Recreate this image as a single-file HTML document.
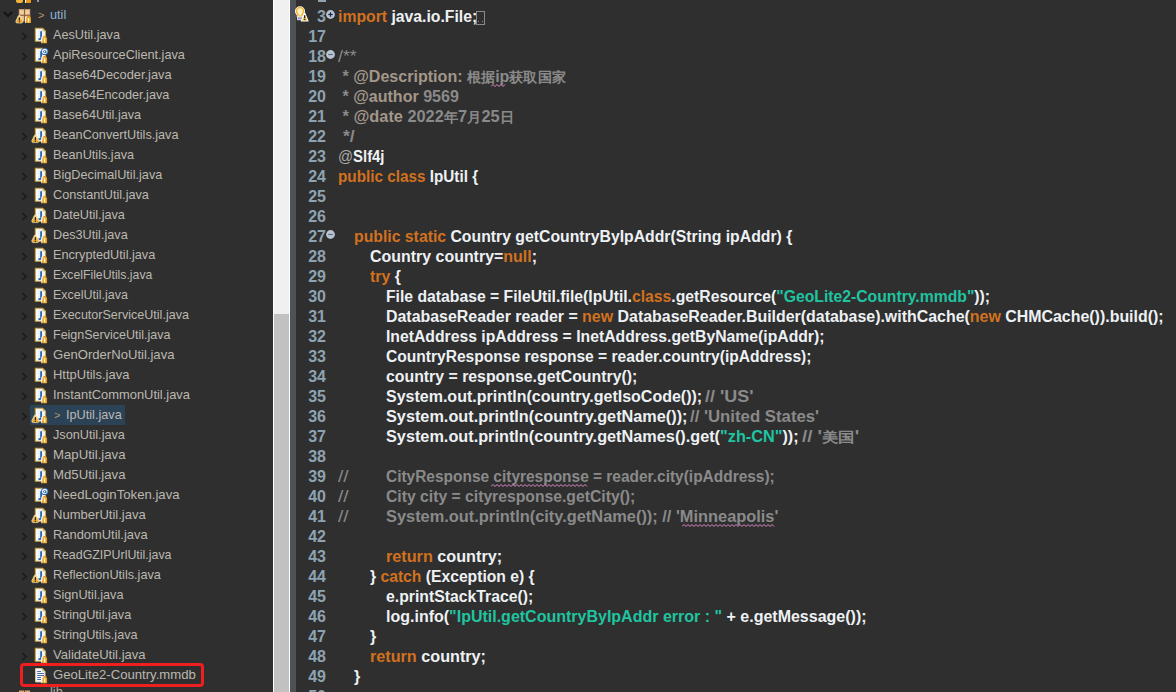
<!DOCTYPE html>
<html><head><meta charset="utf-8"><style>
html,body{margin:0;padding:0;}
body{width:1176px;height:692px;overflow:hidden;position:relative;background:#2f2f2f;font-family:"Liberation Sans",sans-serif;}
#left{position:absolute;left:0;top:0;width:273px;height:692px;background:#2f2f2f;overflow:hidden;}
#sb{position:absolute;left:273px;top:0;width:17px;height:692px;background:#f0f0f0;box-sizing:border-box;border-left:1px solid #fff;border-right:1px solid #fff;}
#thumb{position:absolute;left:274px;top:314px;width:15px;height:378px;background:#c1c1c1;}
#ruler{position:absolute;left:290px;top:0;width:6px;height:692px;background:#4e5256;}
.tl{position:absolute;white-space:pre;transform-origin:0 0;font-size:12.7px;line-height:20px;color:#bcb8b0;}
.dirty{color:#b8956a;}
.ico{position:absolute;line-height:0;}
.sel{position:absolute;left:30px;width:95px;height:20px;background:#2b4257;}
.redbox{position:absolute;left:20px;top:663px;width:184px;height:24px;box-sizing:border-box;border:3px solid #f01e1e;border-radius:4px;}
.ln{position:absolute;left:0;width:326px;text-align:right;font-size:16px;line-height:20px;font-weight:bold;color:#8ea3b1;}
.cl{position:absolute;white-space:pre;font-size:16px;line-height:20px;font-weight:bold;transform-origin:0 0;}
.k{color:#d2711e;} .p{color:#eef1f4;} .s{color:#1fc4a0;} .c{color:#8a8a8a;} .ct{color:#8a8a8a;font-weight:normal;} .jt{color:#a3978a;} .an{color:#a8a8a8;font-weight:normal;}
.cj{font-size:14px;}
.box{position:absolute;left:476px;top:11px;width:9px;height:14px;box-sizing:border-box;border:1px solid #8a8a8a;}
</style></head><body>
<svg width="0" height="0" style="position:absolute"><defs><linearGradient id="lg" x1="0" y1="0" x2="1" y2="0"><stop offset="0" stop-color="#e08a10"/><stop offset="0.5" stop-color="#f8c040"/><stop offset="1" stop-color="#e08a10"/></linearGradient><linearGradient id="wg2" x1="0" y1="0" x2="0" y2="1"><stop offset="0" stop-color="#f9dc84"/><stop offset="1" stop-color="#e69a1c"/></linearGradient></defs></svg>
<div id="left">
<div style="position:absolute;left:16px;top:0;width:7px;height:3px;background:#efb43a;border-radius:0 0 2px 2px"></div>
<div style="position:absolute;left:25px;top:0;width:1px;height:3px;background:#fff"></div>
<div style="position:absolute;left:26px;top:0;width:5px;height:3px;background:#ee9a14;border-radius:0 0 1px 1px"></div>
<div style="position:absolute;left:37px;top:0;width:2px;height:2px;background:#8a9ab0"></div>
<div class="ico" style="top:11px;left:3px"><svg width="10" height="7" viewBox="0 0 10 7"><path d="M1 1l4 4 4-4" fill="none" stroke="#121212" stroke-width="1.8"/></svg></div>
<div class="ico" style="top:8px;left:15px"><svg width="17" height="17" viewBox="0 0 17 17" overflow="visible"><rect x="3.8" y="1.1" width="11.4" height="12.4" fill="#d9aa7c"/><rect x="5" y="2.3" width="3.8" height="4" fill="#ecd3a0"/><rect x="10.4" y="2.3" width="3.8" height="4" fill="#ecd3a0"/><rect x="5" y="8" width="3.8" height="4" fill="#e4c494"/><rect x="10.4" y="8" width="3.8" height="4" fill="#e4c494"/><path d="M9.5 0.5v13.5M3.8 7.3h11.8" stroke="#8a5634" stroke-width="0.9"/><g transform="translate(2,-0.6)"><path d="M2.35 7.9 Q3.1 7.9 3.6 8.9 L5.8 13.6 Q6.3 15.6 4.6 15.6 H0.1 Q-1.6 15.6 -1.1 13.6 L1.1 8.9 Q1.6 7.9 2.35 7.9 Z" fill="url(#wg2)" stroke="#fbf0d0" stroke-width="0.6"/><path d="M2.35 10.2v3" stroke="#1e1200" stroke-width="1.1"/><rect x="1.8" y="13.9" width="1.1" height="1" fill="#1e1200"/></g><g transform="translate(1.9,-1.1)"><rect x="8.3" y="9.8" width="1.3" height="6.4" fill="#fff"/><rect x="9.5" y="10.4" width="4.6" height="5.8" rx="0.5" fill="url(#lg)"/><rect x="10.2" y="9" width="3.2" height="1.6" rx="0.4" fill="#e89a18"/><rect x="10.9" y="11.4" width="1.3" height="3.8" fill="#fff2b8"/></g></svg></div>
<div class="tl" style="top:5px;left:38px"><span class="dirty" style="font-size:11px">&gt;</span></div><div class="tl" style="top:5px;left:50px;color:#8cb2d6">util</div>
<div class="ico" style="top:32px;left:21px"><svg width="7" height="9" viewBox="0 0 7 9"><path d="M1.2 1l4 3.5-4 3.5" fill="none" stroke="#1a1a1a" stroke-width="1.5"/></svg></div>
<div class="ico" style="top:27px;left:33px"><svg width="16" height="18" viewBox="0 0 16 18" overflow="visible"><path d="M2.3 1.3h7.3l2.9 2.9v10.1h-10.2z" fill="#eef3fb" stroke="#c8a040" stroke-width="1.1"/><path d="M9.6 1.3v2.9h2.9z" fill="#d6b868"/><path d="M3.3 2.3h1.2v11h-1.2z" fill="#fff"/><path d="M8.1 4.2v6.3c0 1.3-1 1.8-2.6 1.5" fill="none" stroke="#2866a8" stroke-width="1.8"/><rect x="8.3" y="9.8" width="1.3" height="6.4" fill="#fff"/><rect x="9.5" y="10.4" width="4.6" height="5.8" rx="0.5" fill="url(#lg)"/><rect x="10.2" y="9" width="3.2" height="1.6" rx="0.4" fill="#e89a18"/><rect x="10.9" y="11.4" width="1.3" height="3.8" fill="#fff2b8"/></svg></div>
<div class="tl" style="top:25px;left:53px">AesUtil.java</div>
<div class="ico" style="top:52px;left:21px"><svg width="7" height="9" viewBox="0 0 7 9"><path d="M1.2 1l4 3.5-4 3.5" fill="none" stroke="#1a1a1a" stroke-width="1.5"/></svg></div>
<div class="ico" style="top:47px;left:33px"><svg width="16" height="18" viewBox="0 0 16 18" overflow="visible"><path d="M2.3 1.3h7.3l2.9 2.9v10.1h-10.2z" fill="#eef3fb" stroke="#c8a040" stroke-width="1.1"/><path d="M9.6 1.3v2.9h2.9z" fill="#d6b868"/><path d="M3.3 2.3h1.2v11h-1.2z" fill="#fff"/><path d="M8.1 4.2v6.3c0 1.3-1 1.8-2.6 1.5" fill="none" stroke="#2866a8" stroke-width="1.8"/><circle cx="11.7" cy="4.4" r="3.6" fill="#2a64a8"/><circle cx="11.7" cy="4.4" r="2.7" fill="#fff"/><circle cx="11.7" cy="4.6" r="1.2" fill="none" stroke="#2a64a8" stroke-width="1"/><path d="M12.9 4v1.6c0 .6.6.8 1 .3" fill="none" stroke="#2a64a8" stroke-width="0.9"/><rect x="8.3" y="9.8" width="1.3" height="6.4" fill="#fff"/><rect x="9.5" y="10.4" width="4.6" height="5.8" rx="0.5" fill="url(#lg)"/><rect x="10.2" y="9" width="3.2" height="1.6" rx="0.4" fill="#e89a18"/><rect x="10.9" y="11.4" width="1.3" height="3.8" fill="#fff2b8"/></svg></div>
<div class="tl" style="top:45px;left:53px">ApiResourceClient.java</div>
<div class="ico" style="top:72px;left:21px"><svg width="7" height="9" viewBox="0 0 7 9"><path d="M1.2 1l4 3.5-4 3.5" fill="none" stroke="#1a1a1a" stroke-width="1.5"/></svg></div>
<div class="ico" style="top:67px;left:33px"><svg width="16" height="18" viewBox="0 0 16 18" overflow="visible"><path d="M2.3 1.3h7.3l2.9 2.9v10.1h-10.2z" fill="#eef3fb" stroke="#c8a040" stroke-width="1.1"/><path d="M9.6 1.3v2.9h2.9z" fill="#d6b868"/><path d="M3.3 2.3h1.2v11h-1.2z" fill="#fff"/><path d="M8.1 4.2v6.3c0 1.3-1 1.8-2.6 1.5" fill="none" stroke="#2866a8" stroke-width="1.8"/><rect x="8.3" y="9.8" width="1.3" height="6.4" fill="#fff"/><rect x="9.5" y="10.4" width="4.6" height="5.8" rx="0.5" fill="url(#lg)"/><rect x="10.2" y="9" width="3.2" height="1.6" rx="0.4" fill="#e89a18"/><rect x="10.9" y="11.4" width="1.3" height="3.8" fill="#fff2b8"/></svg></div>
<div class="tl" style="top:65px;left:53px;transform:scaleX(1.0138)">Base64Decoder.java</div>
<div class="ico" style="top:92px;left:21px"><svg width="7" height="9" viewBox="0 0 7 9"><path d="M1.2 1l4 3.5-4 3.5" fill="none" stroke="#1a1a1a" stroke-width="1.5"/></svg></div>
<div class="ico" style="top:87px;left:33px"><svg width="16" height="18" viewBox="0 0 16 18" overflow="visible"><path d="M2.3 1.3h7.3l2.9 2.9v10.1h-10.2z" fill="#eef3fb" stroke="#c8a040" stroke-width="1.1"/><path d="M9.6 1.3v2.9h2.9z" fill="#d6b868"/><path d="M3.3 2.3h1.2v11h-1.2z" fill="#fff"/><path d="M8.1 4.2v6.3c0 1.3-1 1.8-2.6 1.5" fill="none" stroke="#2866a8" stroke-width="1.8"/><rect x="8.3" y="9.8" width="1.3" height="6.4" fill="#fff"/><rect x="9.5" y="10.4" width="4.6" height="5.8" rx="0.5" fill="url(#lg)"/><rect x="10.2" y="9" width="3.2" height="1.6" rx="0.4" fill="#e89a18"/><rect x="10.9" y="11.4" width="1.3" height="3.8" fill="#fff2b8"/></svg></div>
<div class="tl" style="top:85px;left:53px">Base64Encoder.java</div>
<div class="ico" style="top:112px;left:21px"><svg width="7" height="9" viewBox="0 0 7 9"><path d="M1.2 1l4 3.5-4 3.5" fill="none" stroke="#1a1a1a" stroke-width="1.5"/></svg></div>
<div class="ico" style="top:107px;left:33px"><svg width="16" height="18" viewBox="0 0 16 18" overflow="visible"><path d="M2.3 1.3h7.3l2.9 2.9v10.1h-10.2z" fill="#eef3fb" stroke="#c8a040" stroke-width="1.1"/><path d="M9.6 1.3v2.9h2.9z" fill="#d6b868"/><path d="M3.3 2.3h1.2v11h-1.2z" fill="#fff"/><path d="M8.1 4.2v6.3c0 1.3-1 1.8-2.6 1.5" fill="none" stroke="#2866a8" stroke-width="1.8"/><rect x="8.3" y="9.8" width="1.3" height="6.4" fill="#fff"/><rect x="9.5" y="10.4" width="4.6" height="5.8" rx="0.5" fill="url(#lg)"/><rect x="10.2" y="9" width="3.2" height="1.6" rx="0.4" fill="#e89a18"/><rect x="10.9" y="11.4" width="1.3" height="3.8" fill="#fff2b8"/></svg></div>
<div class="tl" style="top:105px;left:53px">Base64Util.java</div>
<div class="ico" style="top:132px;left:21px"><svg width="7" height="9" viewBox="0 0 7 9"><path d="M1.2 1l4 3.5-4 3.5" fill="none" stroke="#1a1a1a" stroke-width="1.5"/></svg></div>
<div class="ico" style="top:127px;left:33px"><svg width="16" height="18" viewBox="0 0 16 18" overflow="visible"><path d="M2.3 1.3h7.3l2.9 2.9v10.1h-10.2z" fill="#eef3fb" stroke="#c8a040" stroke-width="1.1"/><path d="M9.6 1.3v2.9h2.9z" fill="#d6b868"/><path d="M3.3 2.3h1.2v11h-1.2z" fill="#fff"/><path d="M8.1 4.2v6.3c0 1.3-1 1.8-2.6 1.5" fill="none" stroke="#2866a8" stroke-width="1.8"/><rect x="8.3" y="9.8" width="1.3" height="6.4" fill="#fff"/><rect x="9.5" y="10.4" width="4.6" height="5.8" rx="0.5" fill="url(#lg)"/><rect x="10.2" y="9" width="3.2" height="1.6" rx="0.4" fill="#e89a18"/><rect x="10.9" y="11.4" width="1.3" height="3.8" fill="#fff2b8"/><path d="M2.35 7.9 Q3.1 7.9 3.6 8.9 L5.8 13.6 Q6.3 15.6 4.6 15.6 H0.1 Q-1.6 15.6 -1.1 13.6 L1.1 8.9 Q1.6 7.9 2.35 7.9 Z" fill="url(#wg2)" stroke="#fbf0d0" stroke-width="0.6"/><path d="M2.35 10.2v3" stroke="#1e1200" stroke-width="1.1"/><rect x="1.8" y="13.9" width="1.1" height="1" fill="#1e1200"/></svg></div>
<div class="tl" style="top:125px;left:53px">BeanConvertUtils.java</div>
<div class="ico" style="top:152px;left:21px"><svg width="7" height="9" viewBox="0 0 7 9"><path d="M1.2 1l4 3.5-4 3.5" fill="none" stroke="#1a1a1a" stroke-width="1.5"/></svg></div>
<div class="ico" style="top:147px;left:33px"><svg width="16" height="18" viewBox="0 0 16 18" overflow="visible"><path d="M2.3 1.3h7.3l2.9 2.9v10.1h-10.2z" fill="#eef3fb" stroke="#c8a040" stroke-width="1.1"/><path d="M9.6 1.3v2.9h2.9z" fill="#d6b868"/><path d="M3.3 2.3h1.2v11h-1.2z" fill="#fff"/><path d="M8.1 4.2v6.3c0 1.3-1 1.8-2.6 1.5" fill="none" stroke="#2866a8" stroke-width="1.8"/><rect x="8.3" y="9.8" width="1.3" height="6.4" fill="#fff"/><rect x="9.5" y="10.4" width="4.6" height="5.8" rx="0.5" fill="url(#lg)"/><rect x="10.2" y="9" width="3.2" height="1.6" rx="0.4" fill="#e89a18"/><rect x="10.9" y="11.4" width="1.3" height="3.8" fill="#fff2b8"/></svg></div>
<div class="tl" style="top:145px;left:53px">BeanUtils.java</div>
<div class="ico" style="top:172px;left:21px"><svg width="7" height="9" viewBox="0 0 7 9"><path d="M1.2 1l4 3.5-4 3.5" fill="none" stroke="#1a1a1a" stroke-width="1.5"/></svg></div>
<div class="ico" style="top:167px;left:33px"><svg width="16" height="18" viewBox="0 0 16 18" overflow="visible"><path d="M2.3 1.3h7.3l2.9 2.9v10.1h-10.2z" fill="#eef3fb" stroke="#c8a040" stroke-width="1.1"/><path d="M9.6 1.3v2.9h2.9z" fill="#d6b868"/><path d="M3.3 2.3h1.2v11h-1.2z" fill="#fff"/><path d="M8.1 4.2v6.3c0 1.3-1 1.8-2.6 1.5" fill="none" stroke="#2866a8" stroke-width="1.8"/><rect x="8.3" y="9.8" width="1.3" height="6.4" fill="#fff"/><rect x="9.5" y="10.4" width="4.6" height="5.8" rx="0.5" fill="url(#lg)"/><rect x="10.2" y="9" width="3.2" height="1.6" rx="0.4" fill="#e89a18"/><rect x="10.9" y="11.4" width="1.3" height="3.8" fill="#fff2b8"/></svg></div>
<div class="tl" style="top:165px;left:53px">BigDecimalUtil.java</div>
<div class="ico" style="top:192px;left:21px"><svg width="7" height="9" viewBox="0 0 7 9"><path d="M1.2 1l4 3.5-4 3.5" fill="none" stroke="#1a1a1a" stroke-width="1.5"/></svg></div>
<div class="ico" style="top:187px;left:33px"><svg width="16" height="18" viewBox="0 0 16 18" overflow="visible"><path d="M2.3 1.3h7.3l2.9 2.9v10.1h-10.2z" fill="#eef3fb" stroke="#c8a040" stroke-width="1.1"/><path d="M9.6 1.3v2.9h2.9z" fill="#d6b868"/><path d="M3.3 2.3h1.2v11h-1.2z" fill="#fff"/><path d="M8.1 4.2v6.3c0 1.3-1 1.8-2.6 1.5" fill="none" stroke="#2866a8" stroke-width="1.8"/><rect x="8.3" y="9.8" width="1.3" height="6.4" fill="#fff"/><rect x="9.5" y="10.4" width="4.6" height="5.8" rx="0.5" fill="url(#lg)"/><rect x="10.2" y="9" width="3.2" height="1.6" rx="0.4" fill="#e89a18"/><rect x="10.9" y="11.4" width="1.3" height="3.8" fill="#fff2b8"/></svg></div>
<div class="tl" style="top:185px;left:53px">ConstantUtil.java</div>
<div class="ico" style="top:212px;left:21px"><svg width="7" height="9" viewBox="0 0 7 9"><path d="M1.2 1l4 3.5-4 3.5" fill="none" stroke="#1a1a1a" stroke-width="1.5"/></svg></div>
<div class="ico" style="top:207px;left:33px"><svg width="16" height="18" viewBox="0 0 16 18" overflow="visible"><path d="M2.3 1.3h7.3l2.9 2.9v10.1h-10.2z" fill="#eef3fb" stroke="#c8a040" stroke-width="1.1"/><path d="M9.6 1.3v2.9h2.9z" fill="#d6b868"/><path d="M3.3 2.3h1.2v11h-1.2z" fill="#fff"/><path d="M8.1 4.2v6.3c0 1.3-1 1.8-2.6 1.5" fill="none" stroke="#2866a8" stroke-width="1.8"/><rect x="8.3" y="9.8" width="1.3" height="6.4" fill="#fff"/><rect x="9.5" y="10.4" width="4.6" height="5.8" rx="0.5" fill="url(#lg)"/><rect x="10.2" y="9" width="3.2" height="1.6" rx="0.4" fill="#e89a18"/><rect x="10.9" y="11.4" width="1.3" height="3.8" fill="#fff2b8"/><path d="M2.35 7.9 Q3.1 7.9 3.6 8.9 L5.8 13.6 Q6.3 15.6 4.6 15.6 H0.1 Q-1.6 15.6 -1.1 13.6 L1.1 8.9 Q1.6 7.9 2.35 7.9 Z" fill="url(#wg2)" stroke="#fbf0d0" stroke-width="0.6"/><path d="M2.35 10.2v3" stroke="#1e1200" stroke-width="1.1"/><rect x="1.8" y="13.9" width="1.1" height="1" fill="#1e1200"/></svg></div>
<div class="tl" style="top:205px;left:53px">DateUtil.java</div>
<div class="ico" style="top:232px;left:21px"><svg width="7" height="9" viewBox="0 0 7 9"><path d="M1.2 1l4 3.5-4 3.5" fill="none" stroke="#1a1a1a" stroke-width="1.5"/></svg></div>
<div class="ico" style="top:227px;left:33px"><svg width="16" height="18" viewBox="0 0 16 18" overflow="visible"><path d="M2.3 1.3h7.3l2.9 2.9v10.1h-10.2z" fill="#eef3fb" stroke="#c8a040" stroke-width="1.1"/><path d="M9.6 1.3v2.9h2.9z" fill="#d6b868"/><path d="M3.3 2.3h1.2v11h-1.2z" fill="#fff"/><path d="M8.1 4.2v6.3c0 1.3-1 1.8-2.6 1.5" fill="none" stroke="#2866a8" stroke-width="1.8"/><rect x="8.3" y="9.8" width="1.3" height="6.4" fill="#fff"/><rect x="9.5" y="10.4" width="4.6" height="5.8" rx="0.5" fill="url(#lg)"/><rect x="10.2" y="9" width="3.2" height="1.6" rx="0.4" fill="#e89a18"/><rect x="10.9" y="11.4" width="1.3" height="3.8" fill="#fff2b8"/><path d="M2.35 7.9 Q3.1 7.9 3.6 8.9 L5.8 13.6 Q6.3 15.6 4.6 15.6 H0.1 Q-1.6 15.6 -1.1 13.6 L1.1 8.9 Q1.6 7.9 2.35 7.9 Z" fill="url(#wg2)" stroke="#fbf0d0" stroke-width="0.6"/><path d="M2.35 10.2v3" stroke="#1e1200" stroke-width="1.1"/><rect x="1.8" y="13.9" width="1.1" height="1" fill="#1e1200"/></svg></div>
<div class="tl" style="top:225px;left:53px">Des3Util.java</div>
<div class="ico" style="top:252px;left:21px"><svg width="7" height="9" viewBox="0 0 7 9"><path d="M1.2 1l4 3.5-4 3.5" fill="none" stroke="#1a1a1a" stroke-width="1.5"/></svg></div>
<div class="ico" style="top:247px;left:33px"><svg width="16" height="18" viewBox="0 0 16 18" overflow="visible"><path d="M2.3 1.3h7.3l2.9 2.9v10.1h-10.2z" fill="#eef3fb" stroke="#c8a040" stroke-width="1.1"/><path d="M9.6 1.3v2.9h2.9z" fill="#d6b868"/><path d="M3.3 2.3h1.2v11h-1.2z" fill="#fff"/><path d="M8.1 4.2v6.3c0 1.3-1 1.8-2.6 1.5" fill="none" stroke="#2866a8" stroke-width="1.8"/><rect x="8.3" y="9.8" width="1.3" height="6.4" fill="#fff"/><rect x="9.5" y="10.4" width="4.6" height="5.8" rx="0.5" fill="url(#lg)"/><rect x="10.2" y="9" width="3.2" height="1.6" rx="0.4" fill="#e89a18"/><rect x="10.9" y="11.4" width="1.3" height="3.8" fill="#fff2b8"/></svg></div>
<div class="tl" style="top:245px;left:53px">EncryptedUtil.java</div>
<div class="ico" style="top:272px;left:21px"><svg width="7" height="9" viewBox="0 0 7 9"><path d="M1.2 1l4 3.5-4 3.5" fill="none" stroke="#1a1a1a" stroke-width="1.5"/></svg></div>
<div class="ico" style="top:267px;left:33px"><svg width="16" height="18" viewBox="0 0 16 18" overflow="visible"><path d="M2.3 1.3h7.3l2.9 2.9v10.1h-10.2z" fill="#eef3fb" stroke="#c8a040" stroke-width="1.1"/><path d="M9.6 1.3v2.9h2.9z" fill="#d6b868"/><path d="M3.3 2.3h1.2v11h-1.2z" fill="#fff"/><path d="M8.1 4.2v6.3c0 1.3-1 1.8-2.6 1.5" fill="none" stroke="#2866a8" stroke-width="1.8"/><rect x="8.3" y="9.8" width="1.3" height="6.4" fill="#fff"/><rect x="9.5" y="10.4" width="4.6" height="5.8" rx="0.5" fill="url(#lg)"/><rect x="10.2" y="9" width="3.2" height="1.6" rx="0.4" fill="#e89a18"/><rect x="10.9" y="11.4" width="1.3" height="3.8" fill="#fff2b8"/></svg></div>
<div class="tl" style="top:265px;left:53px;transform:scaleX(0.9647)">ExcelFileUtils.java</div>
<div class="ico" style="top:292px;left:21px"><svg width="7" height="9" viewBox="0 0 7 9"><path d="M1.2 1l4 3.5-4 3.5" fill="none" stroke="#1a1a1a" stroke-width="1.5"/></svg></div>
<div class="ico" style="top:287px;left:33px"><svg width="16" height="18" viewBox="0 0 16 18" overflow="visible"><path d="M2.3 1.3h7.3l2.9 2.9v10.1h-10.2z" fill="#eef3fb" stroke="#c8a040" stroke-width="1.1"/><path d="M9.6 1.3v2.9h2.9z" fill="#d6b868"/><path d="M3.3 2.3h1.2v11h-1.2z" fill="#fff"/><path d="M8.1 4.2v6.3c0 1.3-1 1.8-2.6 1.5" fill="none" stroke="#2866a8" stroke-width="1.8"/><rect x="8.3" y="9.8" width="1.3" height="6.4" fill="#fff"/><rect x="9.5" y="10.4" width="4.6" height="5.8" rx="0.5" fill="url(#lg)"/><rect x="10.2" y="9" width="3.2" height="1.6" rx="0.4" fill="#e89a18"/><rect x="10.9" y="11.4" width="1.3" height="3.8" fill="#fff2b8"/></svg></div>
<div class="tl" style="top:285px;left:53px;transform:scaleX(0.9827)">ExcelUtil.java</div>
<div class="ico" style="top:312px;left:21px"><svg width="7" height="9" viewBox="0 0 7 9"><path d="M1.2 1l4 3.5-4 3.5" fill="none" stroke="#1a1a1a" stroke-width="1.5"/></svg></div>
<div class="ico" style="top:307px;left:33px"><svg width="16" height="18" viewBox="0 0 16 18" overflow="visible"><path d="M2.3 1.3h7.3l2.9 2.9v10.1h-10.2z" fill="#eef3fb" stroke="#c8a040" stroke-width="1.1"/><path d="M9.6 1.3v2.9h2.9z" fill="#d6b868"/><path d="M3.3 2.3h1.2v11h-1.2z" fill="#fff"/><path d="M8.1 4.2v6.3c0 1.3-1 1.8-2.6 1.5" fill="none" stroke="#2866a8" stroke-width="1.8"/><rect x="8.3" y="9.8" width="1.3" height="6.4" fill="#fff"/><rect x="9.5" y="10.4" width="4.6" height="5.8" rx="0.5" fill="url(#lg)"/><rect x="10.2" y="9" width="3.2" height="1.6" rx="0.4" fill="#e89a18"/><rect x="10.9" y="11.4" width="1.3" height="3.8" fill="#fff2b8"/></svg></div>
<div class="tl" style="top:305px;left:53px;transform:scaleX(0.9883)">ExecutorServiceUtil.java</div>
<div class="ico" style="top:332px;left:21px"><svg width="7" height="9" viewBox="0 0 7 9"><path d="M1.2 1l4 3.5-4 3.5" fill="none" stroke="#1a1a1a" stroke-width="1.5"/></svg></div>
<div class="ico" style="top:327px;left:33px"><svg width="16" height="18" viewBox="0 0 16 18" overflow="visible"><path d="M2.3 1.3h7.3l2.9 2.9v10.1h-10.2z" fill="#eef3fb" stroke="#c8a040" stroke-width="1.1"/><path d="M9.6 1.3v2.9h2.9z" fill="#d6b868"/><path d="M3.3 2.3h1.2v11h-1.2z" fill="#fff"/><path d="M8.1 4.2v6.3c0 1.3-1 1.8-2.6 1.5" fill="none" stroke="#2866a8" stroke-width="1.8"/><rect x="8.3" y="9.8" width="1.3" height="6.4" fill="#fff"/><rect x="9.5" y="10.4" width="4.6" height="5.8" rx="0.5" fill="url(#lg)"/><rect x="10.2" y="9" width="3.2" height="1.6" rx="0.4" fill="#e89a18"/><rect x="10.9" y="11.4" width="1.3" height="3.8" fill="#fff2b8"/></svg></div>
<div class="tl" style="top:325px;left:53px;transform:scaleX(0.9856)">FeignServiceUtil.java</div>
<div class="ico" style="top:352px;left:21px"><svg width="7" height="9" viewBox="0 0 7 9"><path d="M1.2 1l4 3.5-4 3.5" fill="none" stroke="#1a1a1a" stroke-width="1.5"/></svg></div>
<div class="ico" style="top:347px;left:33px"><svg width="16" height="18" viewBox="0 0 16 18" overflow="visible"><path d="M2.3 1.3h7.3l2.9 2.9v10.1h-10.2z" fill="#eef3fb" stroke="#c8a040" stroke-width="1.1"/><path d="M9.6 1.3v2.9h2.9z" fill="#d6b868"/><path d="M3.3 2.3h1.2v11h-1.2z" fill="#fff"/><path d="M8.1 4.2v6.3c0 1.3-1 1.8-2.6 1.5" fill="none" stroke="#2866a8" stroke-width="1.8"/><rect x="8.3" y="9.8" width="1.3" height="6.4" fill="#fff"/><rect x="9.5" y="10.4" width="4.6" height="5.8" rx="0.5" fill="url(#lg)"/><rect x="10.2" y="9" width="3.2" height="1.6" rx="0.4" fill="#e89a18"/><rect x="10.9" y="11.4" width="1.3" height="3.8" fill="#fff2b8"/></svg></div>
<div class="tl" style="top:345px;left:53px;transform:scaleX(1.0316)">GenOrderNoUtil.java</div>
<div class="ico" style="top:372px;left:21px"><svg width="7" height="9" viewBox="0 0 7 9"><path d="M1.2 1l4 3.5-4 3.5" fill="none" stroke="#1a1a1a" stroke-width="1.5"/></svg></div>
<div class="ico" style="top:367px;left:33px"><svg width="16" height="18" viewBox="0 0 16 18" overflow="visible"><path d="M2.3 1.3h7.3l2.9 2.9v10.1h-10.2z" fill="#eef3fb" stroke="#c8a040" stroke-width="1.1"/><path d="M9.6 1.3v2.9h2.9z" fill="#d6b868"/><path d="M3.3 2.3h1.2v11h-1.2z" fill="#fff"/><path d="M8.1 4.2v6.3c0 1.3-1 1.8-2.6 1.5" fill="none" stroke="#2866a8" stroke-width="1.8"/><rect x="8.3" y="9.8" width="1.3" height="6.4" fill="#fff"/><rect x="9.5" y="10.4" width="4.6" height="5.8" rx="0.5" fill="url(#lg)"/><rect x="10.2" y="9" width="3.2" height="1.6" rx="0.4" fill="#e89a18"/><rect x="10.9" y="11.4" width="1.3" height="3.8" fill="#fff2b8"/></svg></div>
<div class="tl" style="top:365px;left:53px;transform:scaleX(1.0216)">HttpUtils.java</div>
<div class="ico" style="top:392px;left:21px"><svg width="7" height="9" viewBox="0 0 7 9"><path d="M1.2 1l4 3.5-4 3.5" fill="none" stroke="#1a1a1a" stroke-width="1.5"/></svg></div>
<div class="ico" style="top:387px;left:33px"><svg width="16" height="18" viewBox="0 0 16 18" overflow="visible"><path d="M2.3 1.3h7.3l2.9 2.9v10.1h-10.2z" fill="#eef3fb" stroke="#c8a040" stroke-width="1.1"/><path d="M9.6 1.3v2.9h2.9z" fill="#d6b868"/><path d="M3.3 2.3h1.2v11h-1.2z" fill="#fff"/><path d="M8.1 4.2v6.3c0 1.3-1 1.8-2.6 1.5" fill="none" stroke="#2866a8" stroke-width="1.8"/><rect x="8.3" y="9.8" width="1.3" height="6.4" fill="#fff"/><rect x="9.5" y="10.4" width="4.6" height="5.8" rx="0.5" fill="url(#lg)"/><rect x="10.2" y="9" width="3.2" height="1.6" rx="0.4" fill="#e89a18"/><rect x="10.9" y="11.4" width="1.3" height="3.8" fill="#fff2b8"/></svg></div>
<div class="tl" style="top:385px;left:53px;transform:scaleX(1.0172)">InstantCommonUtil.java</div>
<div class="sel" style="top:405px"></div>
<div class="ico" style="top:412px;left:21px"><svg width="7" height="9" viewBox="0 0 7 9"><path d="M1.2 1l4 3.5-4 3.5" fill="none" stroke="#1a1a1a" stroke-width="1.5"/></svg></div>
<div class="ico" style="top:407px;left:33px"><svg width="16" height="18" viewBox="0 0 16 18" overflow="visible"><path d="M2.3 1.3h7.3l2.9 2.9v10.1h-10.2z" fill="#eef3fb" stroke="#c8a040" stroke-width="1.1"/><path d="M9.6 1.3v2.9h2.9z" fill="#d6b868"/><path d="M3.3 2.3h1.2v11h-1.2z" fill="#fff"/><path d="M8.1 4.2v6.3c0 1.3-1 1.8-2.6 1.5" fill="none" stroke="#2866a8" stroke-width="1.8"/><rect x="8.3" y="9.8" width="1.3" height="6.4" fill="#fff"/><rect x="9.5" y="10.4" width="4.6" height="5.8" rx="0.5" fill="url(#lg)"/><rect x="10.2" y="9" width="3.2" height="1.6" rx="0.4" fill="#e89a18"/><rect x="10.9" y="11.4" width="1.3" height="3.8" fill="#fff2b8"/><path d="M2.35 7.9 Q3.1 7.9 3.6 8.9 L5.8 13.6 Q6.3 15.6 4.6 15.6 H0.1 Q-1.6 15.6 -1.1 13.6 L1.1 8.9 Q1.6 7.9 2.35 7.9 Z" fill="url(#wg2)" stroke="#fbf0d0" stroke-width="0.6"/><path d="M2.35 10.2v3" stroke="#1e1200" stroke-width="1.1"/><rect x="1.8" y="13.9" width="1.1" height="1" fill="#1e1200"/></svg></div>
<div class="tl dirty" style="top:405px;left:54px;font-size:11px">&gt;</div>
<div class="tl" style="top:405px;left:66px">IpUtil.java</div>
<div class="ico" style="top:432px;left:21px"><svg width="7" height="9" viewBox="0 0 7 9"><path d="M1.2 1l4 3.5-4 3.5" fill="none" stroke="#1a1a1a" stroke-width="1.5"/></svg></div>
<div class="ico" style="top:427px;left:33px"><svg width="16" height="18" viewBox="0 0 16 18" overflow="visible"><path d="M2.3 1.3h7.3l2.9 2.9v10.1h-10.2z" fill="#eef3fb" stroke="#c8a040" stroke-width="1.1"/><path d="M9.6 1.3v2.9h2.9z" fill="#d6b868"/><path d="M3.3 2.3h1.2v11h-1.2z" fill="#fff"/><path d="M8.1 4.2v6.3c0 1.3-1 1.8-2.6 1.5" fill="none" stroke="#2866a8" stroke-width="1.8"/><rect x="8.3" y="9.8" width="1.3" height="6.4" fill="#fff"/><rect x="9.5" y="10.4" width="4.6" height="5.8" rx="0.5" fill="url(#lg)"/><rect x="10.2" y="9" width="3.2" height="1.6" rx="0.4" fill="#e89a18"/><rect x="10.9" y="11.4" width="1.3" height="3.8" fill="#fff2b8"/></svg></div>
<div class="tl" style="top:425px;left:53px">JsonUtil.java</div>
<div class="ico" style="top:452px;left:21px"><svg width="7" height="9" viewBox="0 0 7 9"><path d="M1.2 1l4 3.5-4 3.5" fill="none" stroke="#1a1a1a" stroke-width="1.5"/></svg></div>
<div class="ico" style="top:447px;left:33px"><svg width="16" height="18" viewBox="0 0 16 18" overflow="visible"><path d="M2.3 1.3h7.3l2.9 2.9v10.1h-10.2z" fill="#eef3fb" stroke="#c8a040" stroke-width="1.1"/><path d="M9.6 1.3v2.9h2.9z" fill="#d6b868"/><path d="M3.3 2.3h1.2v11h-1.2z" fill="#fff"/><path d="M8.1 4.2v6.3c0 1.3-1 1.8-2.6 1.5" fill="none" stroke="#2866a8" stroke-width="1.8"/><rect x="8.3" y="9.8" width="1.3" height="6.4" fill="#fff"/><rect x="9.5" y="10.4" width="4.6" height="5.8" rx="0.5" fill="url(#lg)"/><rect x="10.2" y="9" width="3.2" height="1.6" rx="0.4" fill="#e89a18"/><rect x="10.9" y="11.4" width="1.3" height="3.8" fill="#fff2b8"/></svg></div>
<div class="tl" style="top:445px;left:53px;transform:scaleX(1.0391)">MapUtil.java</div>
<div class="ico" style="top:472px;left:21px"><svg width="7" height="9" viewBox="0 0 7 9"><path d="M1.2 1l4 3.5-4 3.5" fill="none" stroke="#1a1a1a" stroke-width="1.5"/></svg></div>
<div class="ico" style="top:467px;left:33px"><svg width="16" height="18" viewBox="0 0 16 18" overflow="visible"><path d="M2.3 1.3h7.3l2.9 2.9v10.1h-10.2z" fill="#eef3fb" stroke="#c8a040" stroke-width="1.1"/><path d="M9.6 1.3v2.9h2.9z" fill="#d6b868"/><path d="M3.3 2.3h1.2v11h-1.2z" fill="#fff"/><path d="M8.1 4.2v6.3c0 1.3-1 1.8-2.6 1.5" fill="none" stroke="#2866a8" stroke-width="1.8"/><rect x="8.3" y="9.8" width="1.3" height="6.4" fill="#fff"/><rect x="9.5" y="10.4" width="4.6" height="5.8" rx="0.5" fill="url(#lg)"/><rect x="10.2" y="9" width="3.2" height="1.6" rx="0.4" fill="#e89a18"/><rect x="10.9" y="11.4" width="1.3" height="3.8" fill="#fff2b8"/></svg></div>
<div class="tl" style="top:465px;left:53px;transform:scaleX(1.0391)">Md5Util.java</div>
<div class="ico" style="top:492px;left:21px"><svg width="7" height="9" viewBox="0 0 7 9"><path d="M1.2 1l4 3.5-4 3.5" fill="none" stroke="#1a1a1a" stroke-width="1.5"/></svg></div>
<div class="ico" style="top:487px;left:33px"><svg width="16" height="18" viewBox="0 0 16 18" overflow="visible"><path d="M2.3 1.3h7.3l2.9 2.9v10.1h-10.2z" fill="#eef3fb" stroke="#c8a040" stroke-width="1.1"/><path d="M9.6 1.3v2.9h2.9z" fill="#d6b868"/><path d="M3.3 2.3h1.2v11h-1.2z" fill="#fff"/><path d="M8.1 4.2v6.3c0 1.3-1 1.8-2.6 1.5" fill="none" stroke="#2866a8" stroke-width="1.8"/><circle cx="11.7" cy="4.4" r="3.6" fill="#2a64a8"/><circle cx="11.7" cy="4.4" r="2.7" fill="#fff"/><circle cx="11.7" cy="4.6" r="1.2" fill="none" stroke="#2a64a8" stroke-width="1"/><path d="M12.9 4v1.6c0 .6.6.8 1 .3" fill="none" stroke="#2a64a8" stroke-width="0.9"/><rect x="8.3" y="9.8" width="1.3" height="6.4" fill="#fff"/><rect x="9.5" y="10.4" width="4.6" height="5.8" rx="0.5" fill="url(#lg)"/><rect x="10.2" y="9" width="3.2" height="1.6" rx="0.4" fill="#e89a18"/><rect x="10.9" y="11.4" width="1.3" height="3.8" fill="#fff2b8"/></svg></div>
<div class="tl" style="top:485px;left:53px;transform:scaleX(1.0372)">NeedLoginToken.java</div>
<div class="ico" style="top:512px;left:21px"><svg width="7" height="9" viewBox="0 0 7 9"><path d="M1.2 1l4 3.5-4 3.5" fill="none" stroke="#1a1a1a" stroke-width="1.5"/></svg></div>
<div class="ico" style="top:507px;left:33px"><svg width="16" height="18" viewBox="0 0 16 18" overflow="visible"><path d="M2.3 1.3h7.3l2.9 2.9v10.1h-10.2z" fill="#eef3fb" stroke="#c8a040" stroke-width="1.1"/><path d="M9.6 1.3v2.9h2.9z" fill="#d6b868"/><path d="M3.3 2.3h1.2v11h-1.2z" fill="#fff"/><path d="M8.1 4.2v6.3c0 1.3-1 1.8-2.6 1.5" fill="none" stroke="#2866a8" stroke-width="1.8"/><rect x="8.3" y="9.8" width="1.3" height="6.4" fill="#fff"/><rect x="9.5" y="10.4" width="4.6" height="5.8" rx="0.5" fill="url(#lg)"/><rect x="10.2" y="9" width="3.2" height="1.6" rx="0.4" fill="#e89a18"/><rect x="10.9" y="11.4" width="1.3" height="3.8" fill="#fff2b8"/><path d="M2.35 7.9 Q3.1 7.9 3.6 8.9 L5.8 13.6 Q6.3 15.6 4.6 15.6 H0.1 Q-1.6 15.6 -1.1 13.6 L1.1 8.9 Q1.6 7.9 2.35 7.9 Z" fill="url(#wg2)" stroke="#fbf0d0" stroke-width="0.6"/><path d="M2.35 10.2v3" stroke="#1e1200" stroke-width="1.1"/><rect x="1.8" y="13.9" width="1.1" height="1" fill="#1e1200"/></svg></div>
<div class="tl" style="top:505px;left:53px;transform:scaleX(1.0278)">NumberUtil.java</div>
<div class="ico" style="top:532px;left:21px"><svg width="7" height="9" viewBox="0 0 7 9"><path d="M1.2 1l4 3.5-4 3.5" fill="none" stroke="#1a1a1a" stroke-width="1.5"/></svg></div>
<div class="ico" style="top:527px;left:33px"><svg width="16" height="18" viewBox="0 0 16 18" overflow="visible"><path d="M2.3 1.3h7.3l2.9 2.9v10.1h-10.2z" fill="#eef3fb" stroke="#c8a040" stroke-width="1.1"/><path d="M9.6 1.3v2.9h2.9z" fill="#d6b868"/><path d="M3.3 2.3h1.2v11h-1.2z" fill="#fff"/><path d="M8.1 4.2v6.3c0 1.3-1 1.8-2.6 1.5" fill="none" stroke="#2866a8" stroke-width="1.8"/><rect x="8.3" y="9.8" width="1.3" height="6.4" fill="#fff"/><rect x="9.5" y="10.4" width="4.6" height="5.8" rx="0.5" fill="url(#lg)"/><rect x="10.2" y="9" width="3.2" height="1.6" rx="0.4" fill="#e89a18"/><rect x="10.9" y="11.4" width="1.3" height="3.8" fill="#fff2b8"/></svg></div>
<div class="tl" style="top:525px;left:53px;transform:scaleX(1.0163)">RandomUtil.java</div>
<div class="ico" style="top:552px;left:21px"><svg width="7" height="9" viewBox="0 0 7 9"><path d="M1.2 1l4 3.5-4 3.5" fill="none" stroke="#1a1a1a" stroke-width="1.5"/></svg></div>
<div class="ico" style="top:547px;left:33px"><svg width="16" height="18" viewBox="0 0 16 18" overflow="visible"><path d="M2.3 1.3h7.3l2.9 2.9v10.1h-10.2z" fill="#eef3fb" stroke="#c8a040" stroke-width="1.1"/><path d="M9.6 1.3v2.9h2.9z" fill="#d6b868"/><path d="M3.3 2.3h1.2v11h-1.2z" fill="#fff"/><path d="M8.1 4.2v6.3c0 1.3-1 1.8-2.6 1.5" fill="none" stroke="#2866a8" stroke-width="1.8"/><rect x="8.3" y="9.8" width="1.3" height="6.4" fill="#fff"/><rect x="9.5" y="10.4" width="4.6" height="5.8" rx="0.5" fill="url(#lg)"/><rect x="10.2" y="9" width="3.2" height="1.6" rx="0.4" fill="#e89a18"/><rect x="10.9" y="11.4" width="1.3" height="3.8" fill="#fff2b8"/></svg></div>
<div class="tl" style="top:545px;left:53px;transform:scaleX(0.9769)">ReadGZIPUrlUtil.java</div>
<div class="ico" style="top:572px;left:21px"><svg width="7" height="9" viewBox="0 0 7 9"><path d="M1.2 1l4 3.5-4 3.5" fill="none" stroke="#1a1a1a" stroke-width="1.5"/></svg></div>
<div class="ico" style="top:567px;left:33px"><svg width="16" height="18" viewBox="0 0 16 18" overflow="visible"><path d="M2.3 1.3h7.3l2.9 2.9v10.1h-10.2z" fill="#eef3fb" stroke="#c8a040" stroke-width="1.1"/><path d="M9.6 1.3v2.9h2.9z" fill="#d6b868"/><path d="M3.3 2.3h1.2v11h-1.2z" fill="#fff"/><path d="M8.1 4.2v6.3c0 1.3-1 1.8-2.6 1.5" fill="none" stroke="#2866a8" stroke-width="1.8"/><rect x="8.3" y="9.8" width="1.3" height="6.4" fill="#fff"/><rect x="9.5" y="10.4" width="4.6" height="5.8" rx="0.5" fill="url(#lg)"/><rect x="10.2" y="9" width="3.2" height="1.6" rx="0.4" fill="#e89a18"/><rect x="10.9" y="11.4" width="1.3" height="3.8" fill="#fff2b8"/><path d="M2.35 7.9 Q3.1 7.9 3.6 8.9 L5.8 13.6 Q6.3 15.6 4.6 15.6 H0.1 Q-1.6 15.6 -1.1 13.6 L1.1 8.9 Q1.6 7.9 2.35 7.9 Z" fill="url(#wg2)" stroke="#fbf0d0" stroke-width="0.6"/><path d="M2.35 10.2v3" stroke="#1e1200" stroke-width="1.1"/><rect x="1.8" y="13.9" width="1.1" height="1" fill="#1e1200"/></svg></div>
<div class="tl" style="top:565px;left:53px">ReflectionUtils.java</div>
<div class="ico" style="top:592px;left:21px"><svg width="7" height="9" viewBox="0 0 7 9"><path d="M1.2 1l4 3.5-4 3.5" fill="none" stroke="#1a1a1a" stroke-width="1.5"/></svg></div>
<div class="ico" style="top:587px;left:33px"><svg width="16" height="18" viewBox="0 0 16 18" overflow="visible"><path d="M2.3 1.3h7.3l2.9 2.9v10.1h-10.2z" fill="#eef3fb" stroke="#c8a040" stroke-width="1.1"/><path d="M9.6 1.3v2.9h2.9z" fill="#d6b868"/><path d="M3.3 2.3h1.2v11h-1.2z" fill="#fff"/><path d="M8.1 4.2v6.3c0 1.3-1 1.8-2.6 1.5" fill="none" stroke="#2866a8" stroke-width="1.8"/><rect x="8.3" y="9.8" width="1.3" height="6.4" fill="#fff"/><rect x="9.5" y="10.4" width="4.6" height="5.8" rx="0.5" fill="url(#lg)"/><rect x="10.2" y="9" width="3.2" height="1.6" rx="0.4" fill="#e89a18"/><rect x="10.9" y="11.4" width="1.3" height="3.8" fill="#fff2b8"/></svg></div>
<div class="tl" style="top:585px;left:53px">SignUtil.java</div>
<div class="ico" style="top:612px;left:21px"><svg width="7" height="9" viewBox="0 0 7 9"><path d="M1.2 1l4 3.5-4 3.5" fill="none" stroke="#1a1a1a" stroke-width="1.5"/></svg></div>
<div class="ico" style="top:607px;left:33px"><svg width="16" height="18" viewBox="0 0 16 18" overflow="visible"><path d="M2.3 1.3h7.3l2.9 2.9v10.1h-10.2z" fill="#eef3fb" stroke="#c8a040" stroke-width="1.1"/><path d="M9.6 1.3v2.9h2.9z" fill="#d6b868"/><path d="M3.3 2.3h1.2v11h-1.2z" fill="#fff"/><path d="M8.1 4.2v6.3c0 1.3-1 1.8-2.6 1.5" fill="none" stroke="#2866a8" stroke-width="1.8"/><rect x="8.3" y="9.8" width="1.3" height="6.4" fill="#fff"/><rect x="9.5" y="10.4" width="4.6" height="5.8" rx="0.5" fill="url(#lg)"/><rect x="10.2" y="9" width="3.2" height="1.6" rx="0.4" fill="#e89a18"/><rect x="10.9" y="11.4" width="1.3" height="3.8" fill="#fff2b8"/></svg></div>
<div class="tl" style="top:605px;left:53px">StringUtil.java</div>
<div class="ico" style="top:632px;left:21px"><svg width="7" height="9" viewBox="0 0 7 9"><path d="M1.2 1l4 3.5-4 3.5" fill="none" stroke="#1a1a1a" stroke-width="1.5"/></svg></div>
<div class="ico" style="top:627px;left:33px"><svg width="16" height="18" viewBox="0 0 16 18" overflow="visible"><path d="M2.3 1.3h7.3l2.9 2.9v10.1h-10.2z" fill="#eef3fb" stroke="#c8a040" stroke-width="1.1"/><path d="M9.6 1.3v2.9h2.9z" fill="#d6b868"/><path d="M3.3 2.3h1.2v11h-1.2z" fill="#fff"/><path d="M8.1 4.2v6.3c0 1.3-1 1.8-2.6 1.5" fill="none" stroke="#2866a8" stroke-width="1.8"/><rect x="8.3" y="9.8" width="1.3" height="6.4" fill="#fff"/><rect x="9.5" y="10.4" width="4.6" height="5.8" rx="0.5" fill="url(#lg)"/><rect x="10.2" y="9" width="3.2" height="1.6" rx="0.4" fill="#e89a18"/><rect x="10.9" y="11.4" width="1.3" height="3.8" fill="#fff2b8"/></svg></div>
<div class="tl" style="top:625px;left:53px">StringUtils.java</div>
<div class="ico" style="top:652px;left:21px"><svg width="7" height="9" viewBox="0 0 7 9"><path d="M1.2 1l4 3.5-4 3.5" fill="none" stroke="#1a1a1a" stroke-width="1.5"/></svg></div>
<div class="ico" style="top:647px;left:33px"><svg width="16" height="18" viewBox="0 0 16 18" overflow="visible"><path d="M2.3 1.3h7.3l2.9 2.9v10.1h-10.2z" fill="#eef3fb" stroke="#c8a040" stroke-width="1.1"/><path d="M9.6 1.3v2.9h2.9z" fill="#d6b868"/><path d="M3.3 2.3h1.2v11h-1.2z" fill="#fff"/><path d="M8.1 4.2v6.3c0 1.3-1 1.8-2.6 1.5" fill="none" stroke="#2866a8" stroke-width="1.8"/><rect x="8.3" y="9.8" width="1.3" height="6.4" fill="#fff"/><rect x="9.5" y="10.4" width="4.6" height="5.8" rx="0.5" fill="url(#lg)"/><rect x="10.2" y="9" width="3.2" height="1.6" rx="0.4" fill="#e89a18"/><rect x="10.9" y="11.4" width="1.3" height="3.8" fill="#fff2b8"/></svg></div>
<div class="tl" style="top:645px;left:53px;transform:scaleX(1.0281)">ValidateUtil.java</div>
<div class="ico" style="top:667px;left:33px"><svg width="16" height="18" viewBox="0 0 16 18"><path d="M2.5 1.5h6.5l3 3v10.5h-9.5z" fill="#f3f6fb" stroke="#d4c49a"/><path d="M9 1.5v3h3z" fill="#d8c48a"/><path d="M4.2 4.5h3.8M4.2 6.5h6.8M4.2 8.5h6.8M4.2 10.5h3.8M4.2 12.5h3.8" stroke="#4e6aa6" stroke-width="1"/><rect x="8.3" y="9.8" width="1.3" height="6.4" fill="#fff"/><rect x="9.5" y="10.4" width="4.6" height="5.8" rx="0.5" fill="url(#lg)"/><rect x="10.2" y="9" width="3.2" height="1.6" rx="0.4" fill="#e89a18"/><rect x="10.9" y="11.4" width="1.3" height="3.8" fill="#fff2b8"/></svg></div>
<div class="tl" style="top:665px;left:53px;transform:scaleX(1.0350)">GeoLite2-Country.mmdb</div>
<div class="redbox"></div>
<div class="ico" style="top:689px;left:18px"><svg width="14" height="4" viewBox="0 0 14 4"><rect x="1" y="0.5" width="11" height="3.5" fill="#d6a878"/><path d="M6.5 0v4" stroke="#7a4a2c"/></svg></div>
<div class="tl" style="top:682px;left:50px;color:#b0aaa0">lib</div>
</div>
<div id="sb"></div><div id="thumb"></div>
<div id="ruler"></div>
<div class="ln" style="top:7px">3</div>
<div class="ico" style="top:10px;left:326px"><svg width="9" height="9" viewBox="0 0 9 9"><circle cx="4.5" cy="4.5" r="4.4" fill="#b8c4d2"/><path d="M2.2 4.5h4.6" stroke="#1c2a48" stroke-width="1.2"/><path d="M4.5 2.2v4.6" stroke="#1c2a48" stroke-width="1.2"/></svg></div>
<div class="cl" id="c3_0" style="top:7px;left:338px;transform:scaleX(0.9850)"><span class="k">import</span><span class="p"> java.io.File;</span></div>
<div class="ln" style="top:27px">17</div>
<div class="ln" style="top:47px">18</div>
<div class="ico" style="top:50px;left:326px"><svg width="9" height="9" viewBox="0 0 9 9"><circle cx="4.5" cy="4.5" r="4.4" fill="#b8c4d2"/><path d="M2.2 4.5h4.6" stroke="#5a6a86" stroke-width="1.2"/></svg></div>
<div class="cl" id="c18_0" style="top:47px;left:338px;transform:scaleX(1.1000)"><span class="ct">/**</span></div>
<div class="ln" style="top:67px">19</div>
<div class="cl" id="c19_0" style="top:67px;left:338px;transform:scaleX(1.0038)"><span class="c"> * </span><span class="jt">@Description:</span><span class="c"> <span class="cj">根据</span>ip<span class="cj">获取国家</span></span></div>
<div class="ln" style="top:87px">20</div>
<div class="cl" id="c20_0" style="top:87px;left:338px;transform:scaleX(1.0026)"><span class="c"> * </span><span class="jt">@author</span><span class="c"> 9569</span></div>
<div class="ln" style="top:107px">21</div>
<div class="cl" id="c21_0" style="top:107px;left:338px;transform:scaleX(1.0203)"><span class="c"> * </span><span class="jt">@date</span><span class="c"> 2022<span class="cj">年</span>7<span class="cj">月</span>25<span class="cj">日</span></span></div>
<div class="ln" style="top:127px">22</div>
<div class="cl" id="c22_0" style="top:127px;left:338px;transform:scaleX(1.1000)"><span class="c"> */</span></div>
<div class="ln" style="top:147px">23</div>
<div class="cl" id="c23_0" style="top:147px;left:338px;transform:scaleX(0.9294)"><span class="an">@</span><span class="p">Slf4j</span></div>
<div class="ln" style="top:167px">24</div>
<div class="cl" id="c24_0" style="top:167px;left:338px;transform:scaleX(0.9548)"><span class="k">public class</span><span class="p"> IpUtil {</span></div>
<div class="ln" style="top:187px">25</div>
<div class="ln" style="top:207px">26</div>
<div class="ln" style="top:227px">27</div>
<div class="ico" style="top:230px;left:326px"><svg width="9" height="9" viewBox="0 0 9 9"><circle cx="4.5" cy="4.5" r="4.4" fill="#b8c4d2"/><path d="M2.2 4.5h4.6" stroke="#5a6a86" stroke-width="1.2"/></svg></div>
<div class="cl" id="c27_0" style="top:227px;left:354px;transform:scaleX(0.9863)"><span class="k">public static</span><span class="p"> Country getCountryByIpAddr(String ipAddr) {</span></div>
<div class="ln" style="top:247px">28</div>
<div class="cl" id="c28_0" style="top:247px;left:370px;transform:scaleX(0.9964)"><span class="p">Country country=</span><span class="k">null</span><span class="p">;</span></div>
<div class="ln" style="top:267px">29</div>
<div class="cl" id="c29_0" style="top:267px;left:370px;transform:scaleX(0.9900)"><span class="k">try</span><span class="p"> {</span></div>
<div class="ln" style="top:287px">30</div>
<div class="cl" id="c30_0" style="top:287px;left:386px;transform:scaleX(0.9829)"><span class="p">File database = FileUtil.file(IpUtil.</span><span class="k">class</span><span class="p">.getResource(</span><span class="s">&quot;GeoLite2-Country.mmdb&quot;</span><span class="p">));</span></div>
<div class="ln" style="top:307px">31</div>
<div class="cl" id="c31_0" style="top:307px;left:386px;transform:scaleX(0.9955)"><span class="p">DatabaseReader reader = </span><span class="k">new</span><span class="p"> DatabaseReader.Builder(database).withCache(</span><span class="k">new</span><span class="p"> CHMCache()).build();</span></div>
<div class="ln" style="top:327px">32</div>
<div class="cl" id="c32_0" style="top:327px;left:386px;transform:scaleX(0.9834)"><span class="p">InetAddress ipAddress = InetAddress.getByName(ipAddr);</span></div>
<div class="ln" style="top:347px">33</div>
<div class="cl" id="c33_0" style="top:347px;left:386px;transform:scaleX(0.9736)"><span class="p">CountryResponse response = reader.country(ipAddress);</span></div>
<div class="ln" style="top:367px">34</div>
<div class="cl" id="c34_0" style="top:367px;left:386px;transform:scaleX(0.9901)"><span class="p">country = response.getCountry();</span></div>
<div class="ln" style="top:387px">35</div>
<div class="cl" id="c35_0" style="top:387px;left:386px"><span class="p">System.out.println(country.getIsoCode());</span></div>
<div class="cl" id="c35_1" style="top:387px;left:705px;transform:scaleX(1.1216)"><span class="c">// &#x27;US&#x27;</span></div>
<div class="ln" style="top:407px">36</div>
<div class="cl" id="c36_0" style="top:407px;left:386px;transform:scaleX(1.0166)"><span class="p">System.out.println(country.getName());</span></div>
<div class="cl" id="c36_1" style="top:407px;left:690px;transform:scaleX(1.0480)"><span class="c">// &#x27;United States&#x27;</span></div>
<div class="ln" style="top:427px">37</div>
<div class="cl" id="c37_0" style="top:427px;left:386px;transform:scaleX(1.0165)"><span class="p">System.out.println(country.getNames().get(</span><span class="s">&quot;zh-CN&quot;</span><span class="p">));</span></div>
<div class="cl" id="c37_1" style="top:427px;left:802px;transform:scaleX(1.1681)"><span class="c">// &#x27;<span class="cj">美国</span>&#x27;</span></div>
<div class="ln" style="top:447px">38</div>
<div class="ln" style="top:467px">39</div>
<div class="cl" id="c39_0" style="top:467px;left:338px;transform:scaleX(1.2000)"><span class="ct">//</span></div>
<div class="cl" id="c39_1" style="top:467px;left:386px;transform:scaleX(0.9661)"><span class="c">CityResponse cityresponse = reader.city(ipAddress);</span></div>
<div class="ln" style="top:487px">40</div>
<div class="cl" id="c40_0" style="top:487px;left:338px;transform:scaleX(1.2000)"><span class="ct">//</span></div>
<div class="cl" id="c40_1" style="top:487px;left:386px;transform:scaleX(0.9822)"><span class="c">City city = cityresponse.getCity();</span></div>
<div class="ln" style="top:507px">41</div>
<div class="cl" id="c41_0" style="top:507px;left:338px;transform:scaleX(1.2000)"><span class="ct">//</span></div>
<div class="cl" id="c41_1" style="top:507px;left:386px;transform:scaleX(1.0235)"><span class="c">System.out.println(city.getName()); // &#x27;Minneapolis&#x27;</span></div>
<div class="ln" style="top:527px">42</div>
<div class="ln" style="top:547px">43</div>
<div class="cl" id="c43_0" style="top:547px;left:386px;transform:scaleX(1.0125)"><span class="k">return</span><span class="p"> country;</span></div>
<div class="ln" style="top:567px">44</div>
<div class="cl" id="c44_0" style="top:567px;left:370px;transform:scaleX(0.9798)"><span class="p">} </span><span class="k">catch</span><span class="p"> (Exception e) {</span></div>
<div class="ln" style="top:587px">45</div>
<div class="cl" id="c45_0" style="top:587px;left:386px;transform:scaleX(0.9858)"><span class="p">e.printStackTrace();</span></div>
<div class="ln" style="top:607px">46</div>
<div class="cl" id="c46_0" style="top:607px;left:386px"><span class="p">log.info(</span><span class="s">&quot;IpUtil.getCountryByIpAddr error : &quot;</span><span class="p"> + e.getMessage());</span></div>
<div class="ln" style="top:627px">47</div>
<div class="cl" id="c47_0" style="top:627px;left:370px"><span class="p">}</span></div>
<div class="ln" style="top:647px">48</div>
<div class="cl" id="c48_0" style="top:647px;left:370px;transform:scaleX(1.0115)"><span class="k">return</span><span class="p"> country;</span></div>
<div class="ln" style="top:667px">49</div>
<div class="cl" id="c49_0" style="top:667px;left:354px"><span class="p">}</span></div>
<div class="ln" style="top:687px">50</div>
<div class="ico" style="left:491px;top:83px"><svg width="17" height="4" viewBox="0 0 17 4"><polyline points="0,2.5 2,0.5 4,2.5 6,0.5 8,2.5 10,0.5 12,2.5 14,0.5" fill="none" stroke="#e08ac8" stroke-width="1"/></svg></div><div class="ico" style="left:491px;top:483px"><svg width="98" height="4" viewBox="0 0 98 4"><polyline points="0,2.5 2,0.5 4,2.5 6,0.5 8,2.5 10,0.5 12,2.5 14,0.5 16,2.5 18,0.5 20,2.5 22,0.5 24,2.5 26,0.5 28,2.5 30,0.5 32,2.5 34,0.5 36,2.5 38,0.5 40,2.5 42,0.5 44,2.5 46,0.5 48,2.5 50,0.5 52,2.5 54,0.5 56,2.5 58,0.5 60,2.5 62,0.5 64,2.5 66,0.5 68,2.5 70,0.5 72,2.5 74,0.5 76,2.5 78,0.5 80,2.5 82,0.5 84,2.5 86,0.5 88,2.5 90,0.5 92,2.5 94,0.5 96,2.5" fill="none" stroke="#e08ac8" stroke-width="1"/></svg></div><div class="ico" style="left:682px;top:523px"><svg width="95" height="4" viewBox="0 0 95 4"><polyline points="0,2.5 2,0.5 4,2.5 6,0.5 8,2.5 10,0.5 12,2.5 14,0.5 16,2.5 18,0.5 20,2.5 22,0.5 24,2.5 26,0.5 28,2.5 30,0.5 32,2.5 34,0.5 36,2.5 38,0.5 40,2.5 42,0.5 44,2.5 46,0.5 48,2.5 50,0.5 52,2.5 54,0.5 56,2.5 58,0.5 60,2.5 62,0.5 64,2.5 66,0.5 68,2.5 70,0.5 72,2.5 74,0.5 76,2.5 78,0.5 80,2.5 82,0.5 84,2.5 86,0.5 88,2.5 90,0.5 92,2.5" fill="none" stroke="#e08ac8" stroke-width="1"/></svg></div>
<div style="position:absolute;left:318px;top:0;width:8px;height:2px;background:#8ea3b1"></div>
<div class="box"></div><div style="position:absolute;left:478px;top:21px;width:1px;height:1px;background:#8a8a8a"></div><div style="position:absolute;left:482px;top:21px;width:1px;height:1px;background:#8a8a8a"></div>
<div class="ico" style="top:6px;left:295px"><svg width="15" height="17" viewBox="0 0 15 17" overflow="visible">
<defs><radialGradient id="bg1" cx="0.45" cy="0.4" r="0.6"><stop offset="0" stop-color="#fffbe0"/><stop offset="0.6" stop-color="#fbe8a0"/><stop offset="1" stop-color="#f2b636"/></radialGradient>
<linearGradient id="wg" x1="0" y1="0" x2="0" y2="1"><stop offset="0" stop-color="#fbe49a"/><stop offset="1" stop-color="#e8a020"/></linearGradient></defs>
<path d="M5 1c2.4 0 4.2 1.9 4.2 4.2 0 1.7-1 2.8-1.7 3.7v1.6H2.5V8.9C1.8 8 0.8 6.9 0.8 5.2 0.8 2.9 2.6 1 5 1z" fill="#fff" stroke="#fff" stroke-width="1.6"/>
<path d="M5 1.6c2 0 3.5 1.6 3.5 3.6 0 1.5-0.9 2.4-1.5 3.3v1.6H3V8.5C2.4 7.6 1.5 6.7 1.5 5.2 1.5 3.2 3 1.6 5 1.6z" fill="#fdf3c0" stroke="#f0b030" stroke-width="1.3"/>
<rect x="2.2" y="10.6" width="5.6" height="3.6" fill="#fff"/><rect x="3" y="11.2" width="4" height="2.4" fill="#8ea6c8"/>
<path d="M9.7 7 L13 15 H6.4 Z" fill="url(#wg)" stroke="#fff" stroke-width="1.2" stroke-linejoin="round"/>
<path d="M9.7 9.2v2.8" stroke="#2a1800" stroke-width="1.2"/><rect x="9.1" y="12.8" width="1.2" height="1.1" fill="#2a1800"/>
</svg></div>
</body></html>
